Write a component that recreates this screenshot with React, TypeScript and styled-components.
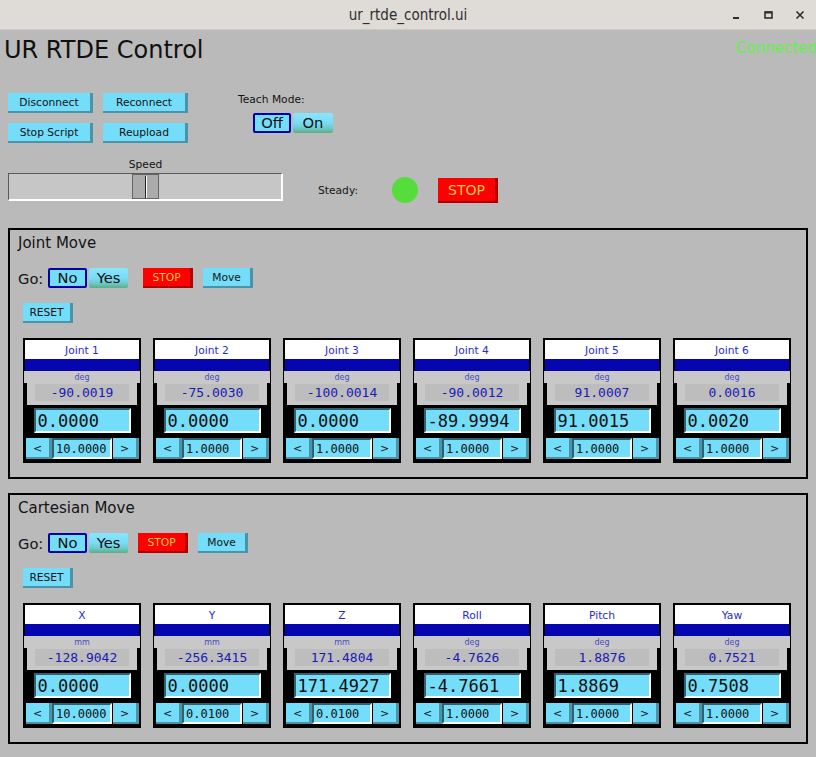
import React from "react";
import styled, { createGlobalStyle, css } from "styled-components";

const CYAN = "#74defa";
const CYAN_SHADOW = "#4a93a8";
const SANS = `"DejaVu Sans", "Liberation Sans", sans-serif`;
const MONO = `"DejaVu Sans Mono", "Liberation Mono", monospace`;

const Global = createGlobalStyle`
  html, body { margin: 0; padding: 0; background: #bababa; }
  body { font-family: ${SANS}; }
  * { box-sizing: border-box; }
`;

const Window = styled.div`
  width: 816px;
  height: 757px;
  overflow: hidden;
  background: #bababa;
  display: flex;
  flex-direction: column;
  color: #141414;
  font-family: ${SANS};
`;

const TitleBar = styled.div`
  height: 30px;
  flex-shrink: 0;
  background: #dfdbd7;
  border-bottom: 1px solid #cdc9c5;
  display: grid;
  grid-template-columns: 1fr auto 1fr;
  align-items: center;
`;

const WindowTitle = styled.div`
  grid-column: 2;
  font-size: 15px;
  font-stretch: condensed;
  color: #2e2e2e;
`;

const WindowControls = styled.div`
  grid-column: 3;
  justify-self: end;
  display: flex;
  height: 100%;
`;

const ControlCell = styled.div`
  width: 32px;
  height: 100%;
  display: flex;
  align-items: center;
  justify-content: center;
  color: #2e2e2e;
`;

const Header = styled.div`
  height: 63px;
  flex-shrink: 0;
  display: flex;
  align-items: flex-start;
  padding-left: 4px;
`;

const AppTitle = styled.h1`
  margin: 6px 0 0;
  font-size: 24px;
  line-height: 28px;
  font-weight: normal;
  color: #101010;
`;

const Status = styled.div`
  margin: 9px 0 0 auto;
  width: 80px;
  flex-shrink: 0;
  white-space: nowrap;
  font-size: 15px;
  line-height: 18px;
  color: #62f04a;
`;

const ControlsRow = styled.div`
  height: 50px;
  flex-shrink: 0;
  display: flex;
  padding-left: 8px;
`;

const ButtonGrid = styled.div`
  display: grid;
  grid-template-columns: 85px 85px;
  grid-auto-rows: 20px;
  column-gap: 10px;
  row-gap: 10px;
`;

const RaisedButton = styled.div<{ $w: number; $h: number; $red?: boolean; $fs?: number }>`
  width: ${(p) => p.$w}px;
  height: ${(p) => p.$h}px;
  flex-shrink: 0;
  padding: 1px 3px 1px 0;
  background: ${(p) => (p.$red ? "#ff0000" : CYAN)};
  box-shadow: inset -3px -2px 0 ${(p) => (p.$red ? "#b00000" : CYAN_SHADOW)};
  color: ${(p) => (p.$red ? "#ffc83c" : "#141414")};
  font-size: ${(p) => p.$fs ?? 10.7}px;
  line-height: 1;
  display: flex;
  align-items: center;
  justify-content: center;
  white-space: nowrap;
`;

const TeachColumn = styled.div`
  margin-left: 50px;
  display: flex;
  flex-direction: column;
`;

const SmallLabel = styled.div`
  font-size: 10.7px;
  line-height: 14px;
  color: #141414;
`;

const Toggle = styled.div<{ $indent: number; $top: number }>`
  display: flex;
  gap: 2px;
  margin: ${(p) => p.$top}px 0 0 ${(p) => p.$indent}px;
`;

const ToggleOption = styled.div<{ $active: boolean; $w: number }>`
  width: ${(p) => p.$w}px;
  height: 20px;
  padding-top: 1px;
  font-size: 14.7px;
  line-height: 1;
  display: flex;
  align-items: center;
  justify-content: center;
  border-radius: 2px;
  color: #101010;
  ${(p) =>
    p.$active
      ? css`
          background: ${CYAN};
          border: 2px solid #0000a8;
        `
      : css`
          background: linear-gradient(to bottom, #8ae5fc 0%, #78dcf6 50%, #6cc8c6 78%, #5aad84 100%);
        `}
`;

const SpeedRow = styled.div`
  display: flex;
  align-items: flex-end;
  flex-shrink: 0;
`;

const SliderColumn = styled.div`
  margin: 15px 0 0 8px;
  width: 275px;
  display: flex;
  flex-direction: column;
  align-items: center;
`;

const SliderTrack = styled.div`
  position: relative;
  margin-top: 1px;
  width: 275px;
  height: 28px;
  background: #c6c6c6;
  border-style: solid;
  border-width: 1px 2px 2px 1px;
  border-color: #5a5a5a #ffffff #ffffff #5a5a5a;
`;

const SliderHandle = styled.div`
  position: absolute;
  top: 0;
  bottom: 0;
  width: 27px;
  background: #ababab;
  border: 1px solid #666;
  display: flex;
  justify-content: center;
  align-items: center;
`;

const HandleGrip = styled.div`
  width: 2px;
  height: 22px;
  border-left: 1px solid #222;
  border-right: 1px solid #fff;
`;

const SteadyGroup = styled.div`
  display: flex;
  align-items: center;
  height: 26px;
  margin: 0 0 -2px 35px;
`;

const SteadyLabel = styled(SmallLabel)`
  width: 74px;
  padding-top: 1px;
`;

const Lamp = styled.div`
  width: 26px;
  height: 26px;
  border-radius: 50%;
  background: #55dd3c;
  margin-right: 20px;
`;

const GroupBox = styled.div<{ $top: number }>`
  margin: ${(p) => p.$top}px 0 0 8px;
  width: 800px;
  height: 251px;
  flex-shrink: 0;
  border: 2px solid #000;
  display: flex;
  flex-direction: column;
  padding-top: 4px;
`;

const GroupTitle = styled.div`
  margin-left: 8px;
  font-size: 15px;
  line-height: 18px;
  color: #141414;
`;

const GoRow = styled.div`
  display: flex;
  align-items: center;
  height: 20px;
  margin-top: 16px;
  padding-left: 8px;
`;

const GoLabel = styled.div`
  width: 30px;
  padding-top: 1px;
  font-size: 14.7px;
  color: #141414;
`;

const Spacer = styled.div<{ $w: number }>`
  width: ${(p) => p.$w}px;
  flex-shrink: 0;
`;

const ResetRow = styled.div`
  display: flex;
  margin: 15px 0 0 13px;
`;

const CardsRow = styled.div`
  display: flex;
  gap: 12px;
  margin: 15px 0 0 13px;
`;

const Card = styled.div`
  width: 118px;
  height: 125px;
  flex-shrink: 0;
  background: #000;
  padding: 2px;
  display: flex;
  flex-direction: column;
`;

const CardTitle = styled.div`
  height: 19px;
  padding-top: 1px;
  background: #fff;
  color: #2a2acc;
  font-size: 10.7px;
  display: flex;
  align-items: center;
  justify-content: center;
`;

const CardBar = styled.div`
  height: 12px;
  background: #0606b0;
`;

const UnitStrip = styled.div`
  height: 12px;
  margin: 0 -1px;
  background: #c8c8c8;
  color: #4a4ac4;
  font-size: 8px;
  display: flex;
  align-items: center;
  justify-content: center;
`;

const ValuePanel = styled.div`
  height: 22px;
  margin: 0 2px;
  background: #c8c8c8;
  padding: 1px 8px 4px 8px;
`;

const ValueReadout = styled.div`
  height: 100%;
  background: #bdbdbd;
  color: #1a1ab4;
  font-family: ${MONO};
  font-size: 13px;
  display: flex;
  align-items: center;
  justify-content: center;
`;

const SunkenField = styled.div`
  background: ${CYAN};
  border-style: solid;
  border-width: 2px;
  border-color: #33606e #ffffff #ffffff #33606e;
  font-family: ${MONO};
  color: #101010;
  display: flex;
  align-items: center;
  white-space: nowrap;
  overflow: hidden;
`;

const SetInput = styled(SunkenField)`
  width: 97px;
  height: 25px;
  margin: 3px auto 0;
  padding-left: 2px;
  font-size: 17px;
`;

const StepRow = styled.div`
  display: flex;
  height: 21px;
  margin-top: 5px;
  padding-left: 1px;
`;

const StepField = styled(SunkenField)`
  width: 60px;
  height: 21px;
  margin-right: 1px;
  padding-left: 2px;
  font-size: 12px;
`;

type Axis = { name: string; unit: string; value: string; set: string; step: string };

const joints: Axis[] = [
  { name: "Joint 1", unit: "deg", value: "-90.0019", set: "0.0000", step: "10.0000" },
  { name: "Joint 2", unit: "deg", value: "-75.0030", set: "0.0000", step: "1.0000" },
  { name: "Joint 3", unit: "deg", value: "-100.0014", set: "0.0000", step: "1.0000" },
  { name: "Joint 4", unit: "deg", value: "-90.0012", set: "-89.9994", step: "1.0000" },
  { name: "Joint 5", unit: "deg", value: "91.0007", set: "91.0015", step: "1.0000" },
  { name: "Joint 6", unit: "deg", value: "0.0016", set: "0.0020", step: "1.0000" },
];

const cartesian: Axis[] = [
  { name: "X", unit: "mm", value: "-128.9042", set: "0.0000", step: "10.0000" },
  { name: "Y", unit: "mm", value: "-256.3415", set: "0.0000", step: "0.0100" },
  { name: "Z", unit: "mm", value: "171.4804", set: "171.4927", step: "0.0100" },
  { name: "Roll", unit: "deg", value: "-4.7626", set: "-4.7661", step: "1.0000" },
  { name: "Pitch", unit: "deg", value: "1.8876", set: "1.8869", step: "1.0000" },
  { name: "Yaw", unit: "deg", value: "0.7521", set: "0.7508", step: "1.0000" },
];

function AxisCard({ a }: { a: Axis }) {
  return (
    <Card>
      <CardTitle>{a.name}</CardTitle>
      <CardBar />
      <UnitStrip>{a.unit}</UnitStrip>
      <ValuePanel>
        <ValueReadout>{a.value}</ValueReadout>
      </ValuePanel>
      <SetInput>{a.set}</SetInput>
      <StepRow>
        <RaisedButton $w={26} $h={21} $fs={11}>&lt;</RaisedButton>
        <StepField>{a.step}</StepField>
        <RaisedButton $w={26} $h={21} $fs={11}>&gt;</RaisedButton>
      </StepRow>
    </Card>
  );
}

function MoveGroup({ title, axes, top, stopGap }: { title: string; axes: Axis[]; top: number; stopGap: number }) {
  return (
    <GroupBox $top={top}>
      <GroupTitle>{title}</GroupTitle>
      <GoRow>
        <GoLabel>Go:</GoLabel>
        <Toggle $indent={0} $top={0}>
          <ToggleOption $active $w={39}>No</ToggleOption>
          <ToggleOption $active={false} $w={39}>Yes</ToggleOption>
        </Toggle>
        <Spacer $w={stopGap} />
        <RaisedButton $red $w={50} $h={20}>STOP</RaisedButton>
        <Spacer $w={10} />
        <RaisedButton $w={50} $h={20}>Move</RaisedButton>
      </GoRow>
      <ResetRow>
        <RaisedButton $w={50} $h={20}>RESET</RaisedButton>
      </ResetRow>
      <CardsRow>
        {axes.map((a) => (
          <AxisCard key={a.name} a={a} />
        ))}
      </CardsRow>
    </GroupBox>
  );
}

function MinimizeIcon() {
  return (
    <svg width="10" height="10" viewBox="0 0 10 10">
      <rect x="2" y="7" width="6" height="2" fill="currentColor" />
    </svg>
  );
}
function MaximizeIcon() {
  return (
    <svg width="10" height="10" viewBox="0 0 10 10">
      <rect x="2" y="2" width="7" height="6" fill="none" stroke="currentColor" strokeWidth="1.6" />
      <rect x="2" y="1.5" width="7" height="2" fill="currentColor" />
    </svg>
  );
}
function CloseIcon() {
  return (
    <svg width="10" height="10" viewBox="0 0 10 10">
      <path d="M1.5 1.5 L8.5 8.5 M8.5 1.5 L1.5 8.5" stroke="currentColor" strokeWidth="1.6" fill="none" />
    </svg>
  );
}

export default function App() {
  const speed = 50;
  const trackInner = 272 - 27;
  return (
    <>
      <Global />
      <Window>
        <TitleBar>
          <WindowTitle>ur_rtde_control.ui</WindowTitle>
          <WindowControls>
            <ControlCell><MinimizeIcon /></ControlCell>
            <ControlCell><MaximizeIcon /></ControlCell>
            <ControlCell><CloseIcon /></ControlCell>
          </WindowControls>
        </TitleBar>
        <Header>
          <AppTitle>UR RTDE Control</AppTitle>
          <Status>Connected</Status>
        </Header>
        <ControlsRow>
          <ButtonGrid>
            <RaisedButton $w={85} $h={20}>Disconnect</RaisedButton>
            <RaisedButton $w={85} $h={20}>Reconnect</RaisedButton>
            <RaisedButton $w={85} $h={20}>Stop Script</RaisedButton>
            <RaisedButton $w={85} $h={20}>Reupload</RaisedButton>
          </ButtonGrid>
          <TeachColumn>
            <SmallLabel>Teach Mode:</SmallLabel>
            <Toggle $indent={15} $top={6}>
              <ToggleOption $active $w={38}>Off</ToggleOption>
              <ToggleOption $active={false} $w={40}>On</ToggleOption>
            </Toggle>
          </TeachColumn>
        </ControlsRow>
        <SpeedRow>
          <SliderColumn>
            <SmallLabel>Speed</SmallLabel>
            <SliderTrack>
              <SliderHandle style={{ left: Math.round((trackInner * speed) / 100) }}>
                <HandleGrip />
              </SliderHandle>
            </SliderTrack>
          </SliderColumn>
          <SteadyGroup>
            <SteadyLabel>Steady:</SteadyLabel>
            <Lamp />
            <RaisedButton $red $w={60} $h={25} $fs={14}>STOP</RaisedButton>
          </SteadyGroup>
        </SpeedRow>
        <MoveGroup title="Joint Move" axes={joints} top={27} stopGap={15} />
        <MoveGroup title="Cartesian Move" axes={cartesian} top={14} stopGap={10} />
      </Window>
    </>
  );
}
